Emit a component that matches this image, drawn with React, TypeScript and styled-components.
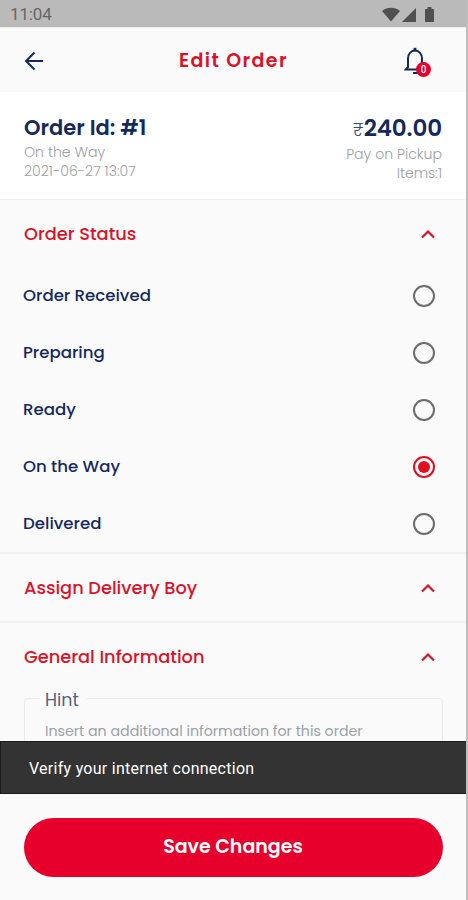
import React from 'react';
import styled, { createGlobalStyle } from 'styled-components';

const navy = '#14295e';
const red = '#dc1228';
const grey = '#9ba0aa';

const GlobalStyle = createGlobalStyle`
  * { box-sizing: border-box; }
  body { margin: 0; background: #fafafb; }
`;

const Screen = styled.div`
  width: 468px;
  height: 900px;
  display: flex;
  flex-direction: column;
  overflow: hidden;
  background: #fafafb;
  border-right: 2px solid #bdbdbd;
  font-family: Poppins, Inter, sans-serif;
  color: ${navy};
`;

const StatusBar = styled.div`
  height: 27px;
  flex: none;
  display: flex;
  align-items: center;
  justify-content: space-between;
  padding: 1px 32px 0 10px;
  margin-right: -2px;
  background: #bababa;
  color: #666;
  font: 400 17px/27px Roboto, sans-serif;
  letter-spacing: -0.15px;
`;

const StatusIcons = styled.svg`
  display: block;
  width: 54px;
  height: 17px;
`;

const AppBar = styled.header`
  height: 65px;
  flex: none;
  display: grid;
  grid-template-columns: 48px 1fr 48px;
  align-items: center;
  padding: 2px 27px 0 10px;
  border-top: 1px solid #ececec;
`;

const Title = styled.h1`
  margin: 0 0 0 18px;
  text-align: center;
  color: ${red};
  font-size: 19px;
  font-weight: 600;
  line-height: 28px;
  letter-spacing: 1.4px;
`;

const IconButton = styled.button`
  width: 48px;
  height: 48px;
  padding: 0;
  border: 0;
  background: none;
  position: relative;
  display: flex;
  align-items: center;
  justify-content: center;
  svg { display: block; }
`;

const Badge = styled.span`
  position: absolute;
  left: 25px;
  top: 25px;
  width: 15px;
  height: 15px;
  border-radius: 50%;
  background: #e6002b;
  color: #fff;
  font: 500 10px/15px Roboto, sans-serif;
  text-align: center;
`;

const Summary = styled.section`
  height: 107px;
  flex: none;
  display: flex;
  justify-content: space-between;
  padding: 21px 24px 0;
  background: #fff;
`;

const SummaryColumn = styled.div<{ $end?: boolean }>`
  display: flex;
  flex-direction: column;
  align-items: ${(p) => (p.$end ? 'flex-end' : 'flex-start')};
`;

const OrderId = styled.div`
  height: 30px;
  font-size: 21px;
  line-height: 29px;
  font-weight: 600;
`;

const Amount = styled.div`
  height: 32px;
  display: flex;
  align-items: baseline;
  font-size: 23px;
  line-height: 30px;
  font-weight: 600;
  letter-spacing: -0.1px;
`;

const Currency = styled.span`
  font-size: 17px;
  font-weight: 300;
  color: #3c4a70;
  letter-spacing: 0;
`;

const Meta = styled.div`
  height: 19px;
  color: ${grey};
  font-size: 14.1px;
  line-height: 19px;
  font-weight: 300;
`;

const Section = styled.section<{ $line: number }>`
  flex: none;
  border-top: ${(p) => p.$line}px solid #f0f0f1;
`;

const SectionHeader = styled.div`
  height: 67px;
  display: flex;
  align-items: center;
  justify-content: space-between;
  padding: 0 31px 0 24px;
  svg { display: block; }
`;

const SectionTitle = styled.h2`
  margin: 0;
  color: ${red};
  font-size: 17.8px;
  font-weight: 500;
  line-height: 24px;
`;

const Option = styled.label`
  height: 57px;
  display: flex;
  align-items: center;
  justify-content: space-between;
  padding: 0 31px 0 23px;
`;

const OptionLabel = styled.span`
  font-size: 16.6px;
  font-weight: 500;
  line-height: 24px;
`;

const Radio = styled.span<{ $on?: boolean }>`
  width: 22px;
  height: 22px;
  display: flex;
  align-items: center;
  justify-content: center;
  border-radius: 50%;
  border: 2px solid ${(p) => (p.$on ? '#e0101f' : '#6c6c6c')};
  &::after {
    content: '';
    width: 12px;
    height: 12px;
    border-radius: 50%;
    background: ${(p) => (p.$on ? '#e0101f' : 'transparent')};
  }
`;

const Field = styled.fieldset`
  height: 80px;
  margin: -3px 23px 0 24px;
  padding: 12px 20px;
  border: 1px solid #e9eaec;
  border-radius: 4px;
`;

const Legend = styled.legend`
  margin-left: -5px;
  padding: 4px 8px 0 5px;
  color: #55617f;
  font-size: 17.4px;
  line-height: 18px;
`;

const Hint = styled.div`
  color: ${grey};
  font-size: 14.2px;
  line-height: 20px;
  white-space: nowrap;
`;

const Content = styled.main`
  flex: 1;
  min-height: 0;
  overflow: hidden;
`;

const Snackbar = styled.div`
  height: 53px;
  flex: none;
  padding: 1px 28px 0;
  margin-right: -1px;
  border: solid #1b1b1b;
  border-width: 1px 0 1px 1px;
  background: #333;
  color: #fff;
  font: 400 16px/51px Roboto, sans-serif;
  letter-spacing: 0.27px;
`;

const Footer = styled.footer`
  height: 106px;
  flex: none;
  padding: 24px 23px 0 24px;
`;

const SaveButton = styled.button`
  display: block;
  width: 100%;
  height: 59px;
  padding: 0 1px 1px 0;
  border: 0;
  border-radius: 30px;
  background: #e6002b;
  color: #fff;
  font: 600 19px/58px Poppins, Inter, sans-serif;
`;

const BackArrow = () => (
  <svg width="20" height="20" viewBox="0 0 20 20" fill="none" stroke={navy} strokeWidth="2">
    <path d="M19 10H2M10.500 1.500 2 10l8.500 8.500" />
  </svg>
);

const Bell = () => (
  <svg width="22" height="28" viewBox="0 0 22 28" fill="none" stroke={navy} strokeWidth="2">
    <path d="M11 3.500C7 3.800 4 7 4 11.500V20l-2.200 2.500h18.400L18 20v-8.500C18 7 15 3.800 11 3.500Z" />
    <path d="M11 .8v3" strokeWidth="2.800" />
    <path d="M9 26h5" />
  </svg>
);

const Caret = () => (
  <svg width="14" height="10" viewBox="0 0 14 10" fill="none" stroke={red} strokeWidth="2.200">
    <path d="M1 8.500 7 2.500l6 6" />
  </svg>
);

const options = [
  { label: 'Order Received' },
  { label: 'Preparing' },
  { label: 'Ready' },
  { label: 'On the Way', on: true },
  { label: 'Delivered' },
];

export default function App() {
  return (
    <>
      <GlobalStyle />
      <Screen>
        <StatusBar>
          <span>11:04</span>
          <StatusIcons viewBox="0 0 54 17" fill="#505050">
            <path d="M0 5C5 .8 13 .8 18 5L9 15.500Z" />
            <path d="M34 2v14H20Z" />
            <path d="M43 3h2.500V1h4v2H52v13h-9Z" />
          </StatusIcons>
        </StatusBar>
        <AppBar>
          <IconButton aria-label="Back"><BackArrow /></IconButton>
          <Title>Edit Order</Title>
          <IconButton aria-label="Notifications">
            <Bell />
            <Badge>0</Badge>
          </IconButton>
        </AppBar>
        <Summary>
          <SummaryColumn>
            <OrderId>Order Id: #1</OrderId>
            <Meta>On the Way</Meta>
            <Meta>2021-06-27 13:07</Meta>
          </SummaryColumn>
          <SummaryColumn $end>
            <Amount><Currency>₹</Currency>240.00</Amount>
            <Meta>Pay on Pickup</Meta>
            <Meta>Items:1</Meta>
          </SummaryColumn>
        </Summary>
        <Content>
          <Section $line={1}>
            <SectionHeader>
              <SectionTitle>Order Status</SectionTitle>
              <Caret />
            </SectionHeader>
            {options.map((o) => (
              <Option key={o.label}>
                <OptionLabel>{o.label}</OptionLabel>
                <Radio $on={o.on} />
              </Option>
            ))}
          </Section>
          <Section $line={2}>
            <SectionHeader>
              <SectionTitle>Assign Delivery Boy</SectionTitle>
              <Caret />
            </SectionHeader>
          </Section>
          <Section $line={2}>
            <SectionHeader>
              <SectionTitle>General Information</SectionTitle>
              <Caret />
            </SectionHeader>
            <Field>
              <Legend>Hint</Legend>
              <Hint>Insert an additional information for this order</Hint>
            </Field>
          </Section>
        </Content>
        <Snackbar>Verify your internet connection</Snackbar>
        <Footer>
          <SaveButton>Save Changes</SaveButton>
        </Footer>
      </Screen>
    </>
  );
}
